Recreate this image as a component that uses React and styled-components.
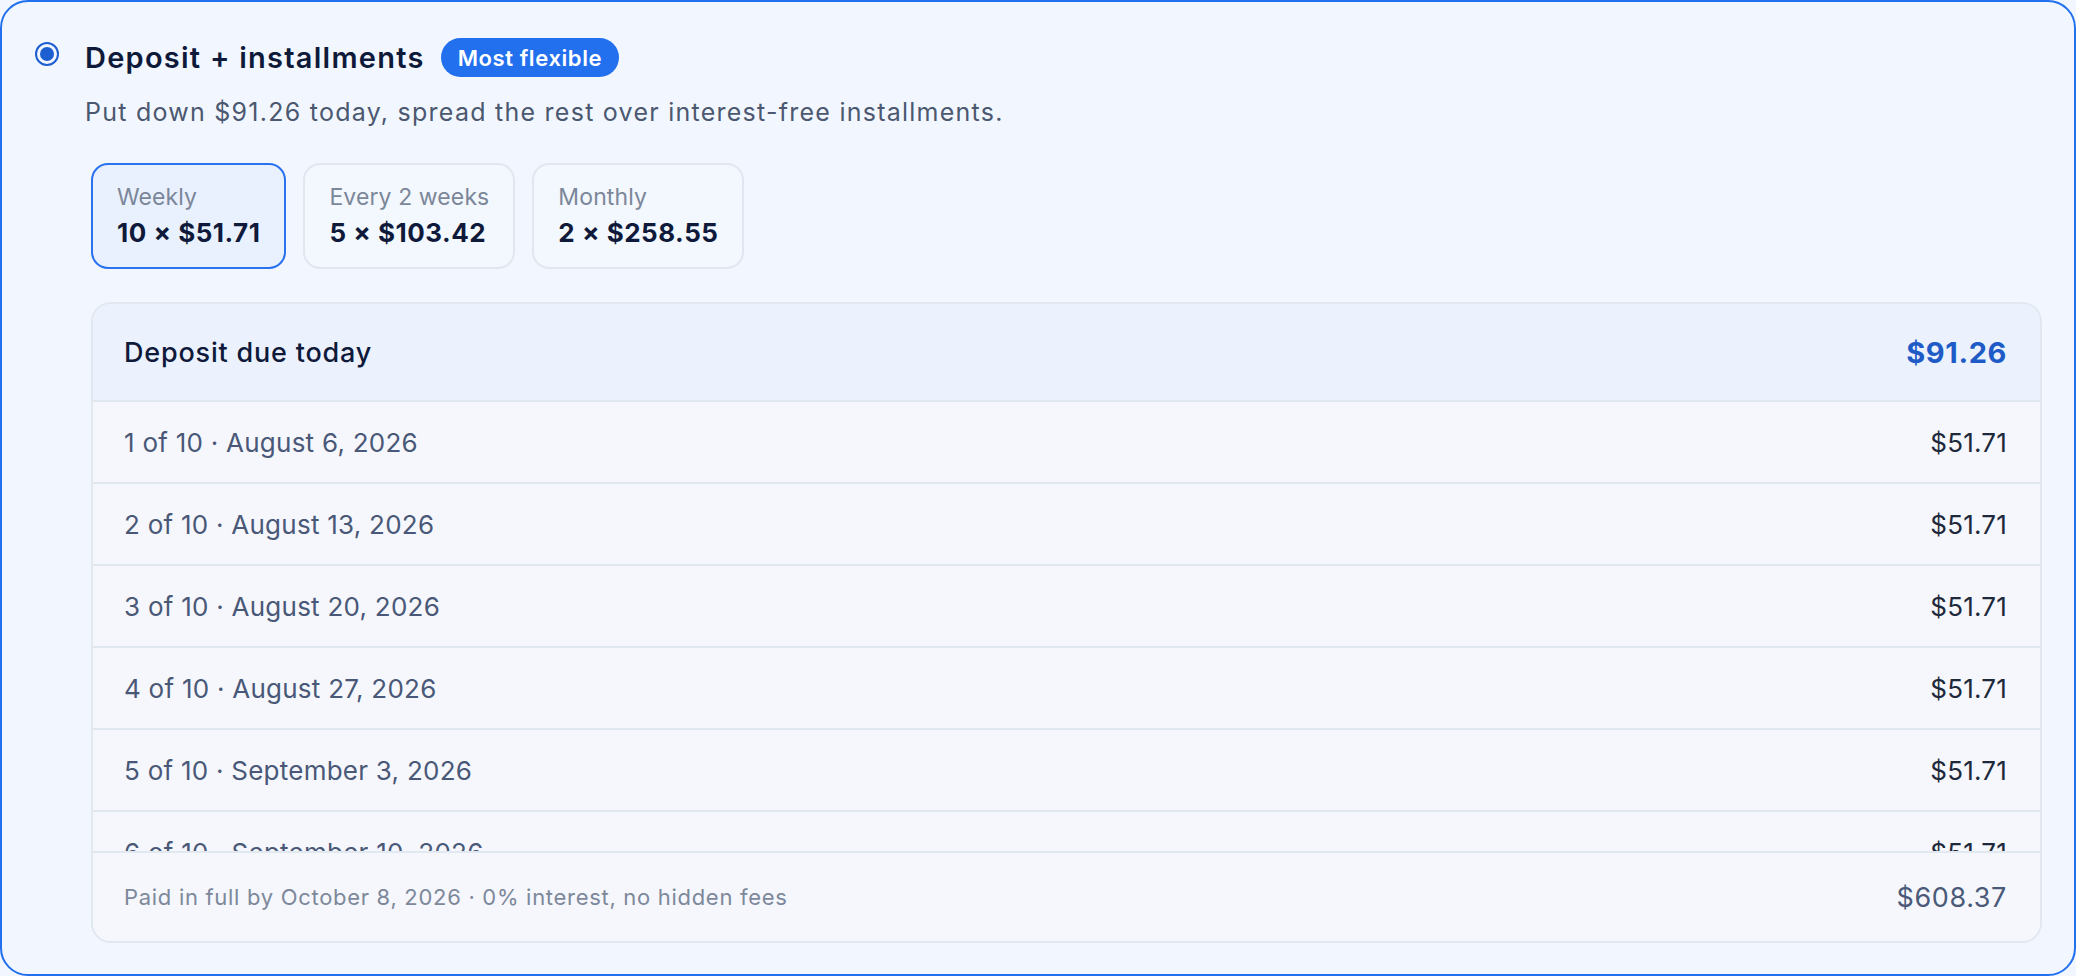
import React, { useState } from "react";
import styled, { createGlobalStyle } from "styled-components";

const GlobalStyle = createGlobalStyle`
  * { box-sizing: border-box; }
  html, body { margin: 0; padding: 0; background: #f2f7ff; }
  body { font-family: Inter, "Noto Sans", "Liberation Sans", sans-serif; }
`;

const Card = styled.div`
  width: 2076px;
  height: 976px;
  display: grid;
  grid-template-columns: 24px 1fr;
  column-gap: 26px;
  padding: 36px 32px 33px 33px;
  background: #f2f7ff;
  border: 2px solid #2270ee;
  border-radius: 28px;
`;

const Radio = styled.span`
  width: 24px;
  height: 24px;
  margin-top: 4px;
  border: 2px solid #1d5fd0;
  border-radius: 50%;
  display: flex;
  align-items: center;
  justify-content: center;

  &::after {
    content: "";
    width: 14px;
    height: 14px;
    border-radius: 50%;
    background: #1d5fd0;
  }
`;

const Content = styled.div`
  display: flex;
  flex-direction: column;
  min-width: 0;
`;

const TitleRow = styled.div`
  display: flex;
  align-items: center;
  gap: 16px;
  height: 39px;
`;

const Title = styled.h2`
  margin: 0;
  font-size: 29px;
  font-weight: 600;
  color: #0f1a3a;
  letter-spacing: 1.25px;
`;

const Badge = styled.span`
  height: 39px;
  padding: 0 17px;
  display: inline-flex;
  align-items: center;
  border-radius: 999px;
  background: #2270ee;
  color: #fff;
  font-size: 22px;
  font-weight: 600;
  letter-spacing: 0.6px;
`;

const Subtitle = styled.p`
  margin: 17px 0 0;
  font-size: 25px;
  line-height: 36px;
  color: #4b5870;
  letter-spacing: 1.25px;
`;

const Options = styled.div`
  display: flex;
  gap: 17px;
  margin: 33px 0 0 6px;
`;

const Option = styled.button`
  height: 106px;
  padding: 0 24px;
  display: flex;
  flex-direction: column;
  align-items: flex-start;
  justify-content: center;
  gap: 6px;
  border-radius: 17px;
  border: 2px solid ${(p) => (p.active ? "#2a72ee" : "#e0e7f1")};
  background: ${(p) => (p.active ? "#e9f1fe" : "#f3f7fe")};
  font-family: inherit;
  cursor: pointer;
  text-align: left;
`;

const OptionLabel = styled.span`
  font-size: 23px;
  line-height: 28px;
  color: #7b8799;
  letter-spacing: 0.1px;
`;

const OptionValue = styled.span`
  font-size: 26px;
  line-height: 32px;
  font-weight: 700;
  color: #0f1a3a;
  letter-spacing: 0.5px;
`;

const Schedule = styled.div`
  margin: 33px 0 0 6px;
  border: 2px solid #e2e8f0;
  border-radius: 20px;
  overflow: hidden;
  display: flex;
  flex-direction: column;
`;

const Row = styled.div`
  display: flex;
  align-items: center;
  justify-content: space-between;
  padding: 0 33px 0 31px;
  flex-shrink: 0;
`;

const HeadRow = styled(Row)`
  height: 98px;
  background: #ebf2fd;
  border-bottom: 2px solid #e2e8f0;
`;

const HeadLabel = styled.span`
  font-size: 27px;
  font-weight: 500;
  color: #0f1a3a;
  letter-spacing: 0.8px;
`;

const HeadAmount = styled.span`
  font-size: 29px;
  font-weight: 700;
  color: #1e5bc6;
  letter-spacing: 0.6px;
`;

const List = styled.div`
  height: 449px;
  overflow-y: auto;
  background: #f5f7fc;
  scrollbar-width: none;
  &::-webkit-scrollbar { display: none; }
`;

const ItemRow = styled(Row)`
  height: 82px;
  border-bottom: 2px solid #e2e8f0;
`;

const ItemLabel = styled.span`
  font-size: 26px;
  color: #4a5878;
  letter-spacing: 0.25px;
`;

const ItemAmount = styled.span`
  font-size: 26px;
  color: #1e293b;
  letter-spacing: 0.2px;
`;

const FootRow = styled(Row)`
  height: 90px;
  background: #f5f7fc;
  border-top: 2px solid #e2e8f0;
`;

const FootNote = styled.span`
  font-size: 22px;
  color: #7d889b;
  letter-spacing: 0.7px;
`;

const FootTotal = styled.span`
  font-size: 27px;
  color: #4b5a78;
  letter-spacing: 0.6px;
`;

const plans = [
  { id: "weekly", label: "Weekly", count: 10, amount: "$51.71" },
  { id: "biweekly", label: "Every 2 weeks", count: 5, amount: "$103.42" },
  { id: "monthly", label: "Monthly", count: 2, amount: "$258.55" },
];

const dates = [
  "August 6, 2026",
  "August 13, 2026",
  "August 20, 2026",
  "August 27, 2026",
  "September 3, 2026",
  "September 10, 2026",
  "September 17, 2026",
  "September 24, 2026",
  "October 1, 2026",
  "October 8, 2026",
];

const App = () => {
  const [plan, setPlan] = useState("weekly");

  return (
    <>
      <GlobalStyle />
      <Card>
        <Radio />
        <Content>
          <TitleRow>
            <Title>Deposit + installments</Title>
            <Badge>Most flexible</Badge>
          </TitleRow>
          <Subtitle>
            Put down $91.26 today, spread the rest over interest-free installments.
          </Subtitle>

          <Options>
            {plans.map((p) => (
              <Option key={p.id} active={plan === p.id} onClick={() => setPlan(p.id)}>
                <OptionLabel>{p.label}</OptionLabel>
                <OptionValue>
                  {p.count} × {p.amount}
                </OptionValue>
              </Option>
            ))}
          </Options>

          <Schedule>
            <HeadRow>
              <HeadLabel>Deposit due today</HeadLabel>
              <HeadAmount>$91.26</HeadAmount>
            </HeadRow>
            <List>
              {dates.map((d, i) => (
                <ItemRow key={d}>
                  <ItemLabel>
                    {i + 1} of 10 · {d}
                  </ItemLabel>
                  <ItemAmount>$51.71</ItemAmount>
                </ItemRow>
              ))}
            </List>
            <FootRow>
              <FootNote>Paid in full by October 8, 2026 · 0% interest, no hidden fees</FootNote>
              <FootTotal>$608.37</FootTotal>
            </FootRow>
          </Schedule>
        </Content>
      </Card>
    </>
  );
};

export default App;
